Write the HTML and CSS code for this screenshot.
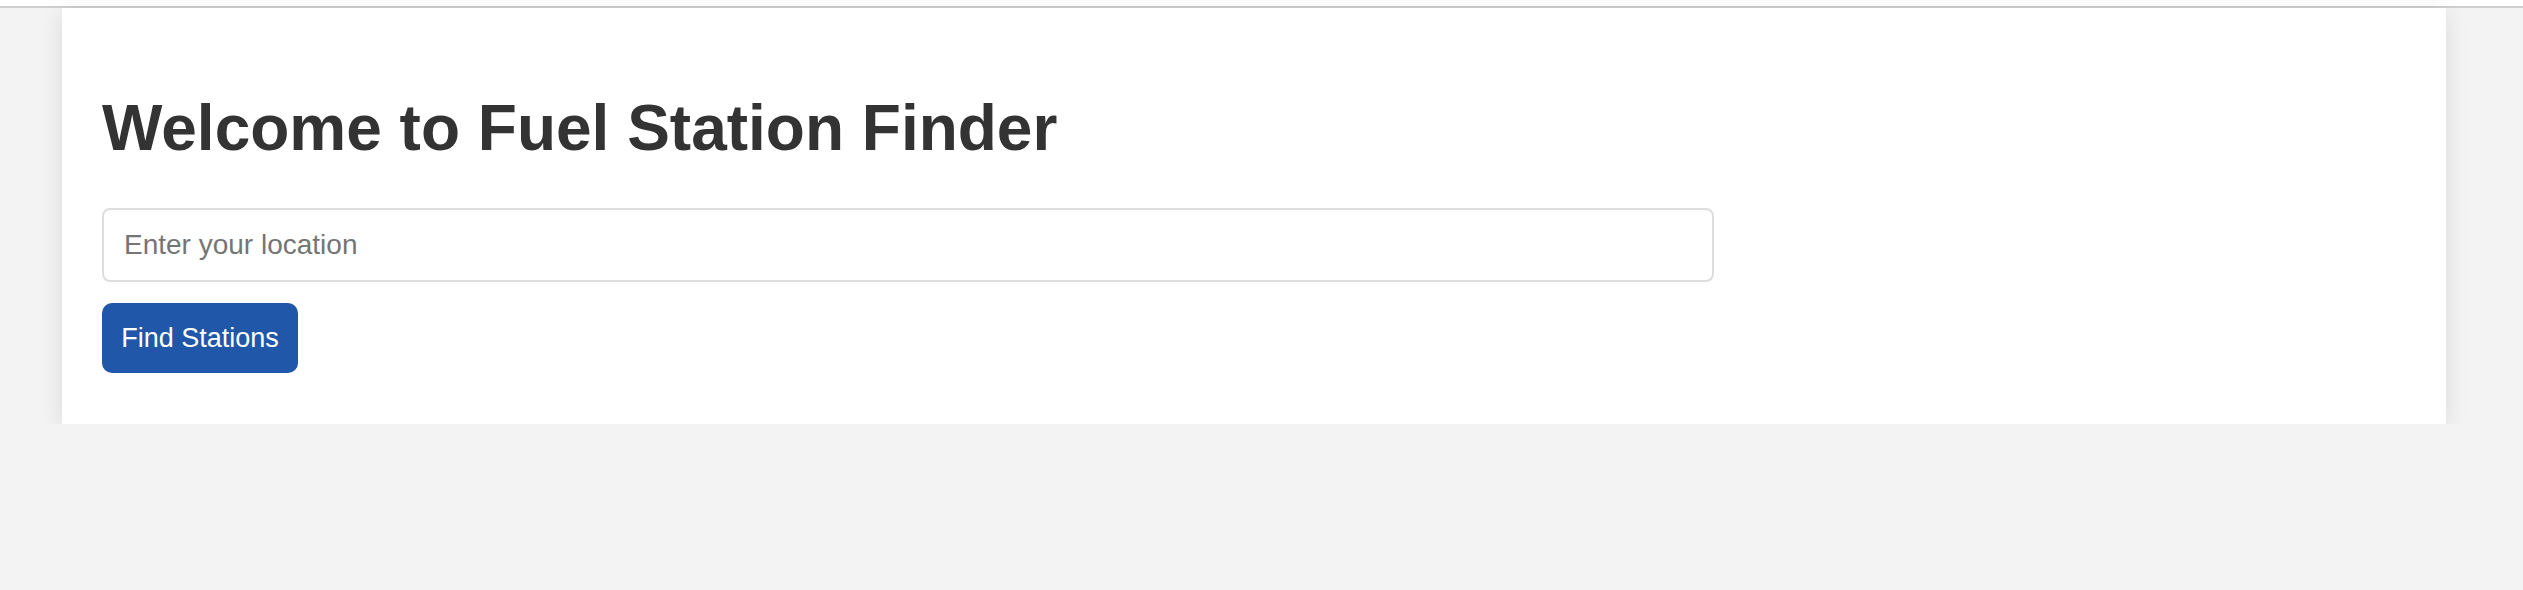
FILE: index.html
```html
<!DOCTYPE html>
<html lang="en">
<head>
<meta charset="utf-8">
<title>Fuel Station Finder</title>
<link rel="stylesheet" href="styles.css">
</head>
<body>
<div class="topbar"></div>
<main class="container">
  <h1 class="title">Welcome to Fuel Station Finder</h1>
  <form class="search">
    <input class="location" type="text" placeholder="Enter your location">
    <button class="find" type="button">Find Stations</button>
  </form>
</main>
</body>
</html>
```

FILE: styles.css
```css
html, body {
  margin: 0;
  padding: 0;
}
body {
  background: #f3f3f3;
  font-family: "Liberation Sans", Arial, sans-serif;
  color: #333;
}
.topbar {
  height: 6px;
  background: #ffffff;
  border-bottom: 2px solid #cfcfcf;
}
.container {
  margin-left: 62px;
  width: 2384px;
  box-sizing: border-box;
  background: #ffffff;
  box-shadow: 0 4px 22px rgba(0, 0, 0, 0.1);
  padding: 40px 40px 51px;
}
.title {
  margin: 43px 0 43px;
  font-size: 64px;
  line-height: 74px;
  font-weight: bold;
  color: #333333;
}
.search {
  display: flex;
  flex-direction: column;
  align-items: flex-start;
}
.location {
  box-sizing: border-box;
  width: 1612px;
  height: 74px;
  border: 2px solid #dddddd;
  border-radius: 8px;
  padding: 0 20px;
  font-family: "Liberation Sans", Arial, sans-serif;
  font-size: 28px;
  color: #333;
  outline: none;
}
.location::placeholder {
  color: #757575;
}
.find {
  margin-top: 21px;
  box-sizing: border-box;
  width: 196px;
  height: 70px;
  border: none;
  border-radius: 10px;
  background: #2057a9;
  color: #ffffff;
  font-family: "Liberation Sans", Arial, sans-serif;
  font-size: 27px;
  padding: 0;
  white-space: nowrap;
  text-align: center;
  cursor: pointer;
}
```
